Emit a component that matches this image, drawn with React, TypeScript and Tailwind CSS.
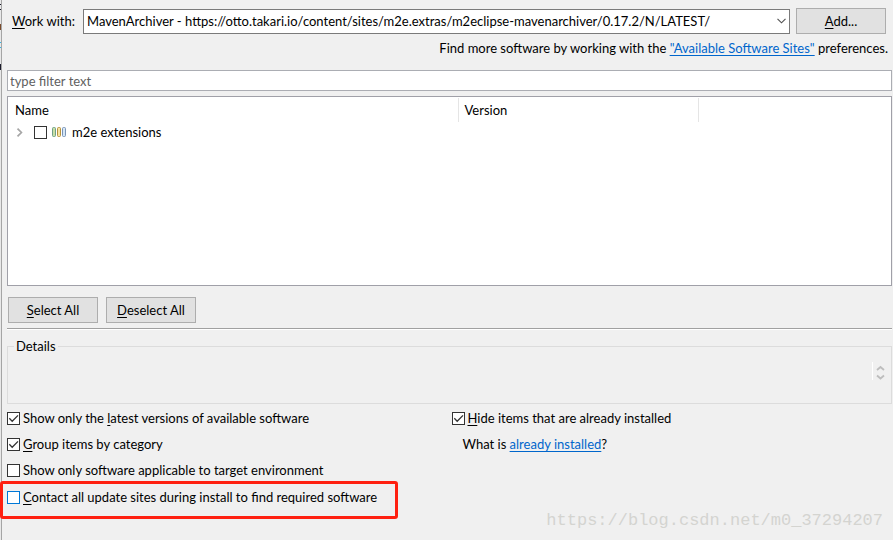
import { type ReactNode } from "react";

function Check({
  children,
  checked = false,
  blue = false,
}: {
  children: ReactNode;
  checked?: boolean;
  blue?: boolean;
}) {
  return (
    <label className="flex h-[26px] items-center gap-[3px]">
      <span className="grid size-[13px]">
        <input
          type="checkbox"
          defaultChecked={checked}
          className={`peer col-start-1 row-start-1 size-[13px] appearance-none border bg-white ${
            blue ? "border-[#0078d7]" : "border-[#333333]"
          }`}
        />
        <svg
          viewBox="0 0 13 13"
          className="pointer-events-none invisible col-start-1 row-start-1 size-[13px] peer-checked:visible"
          fill="none"
          stroke="#333333"
          strokeWidth="1.3"
          aria-hidden="true"
        >
          <path d="M2.3 6.3 5.2 9.3 11 3.4" />
        </svg>
      </span>
      <span className="whitespace-nowrap">{children}</span>
    </label>
  );
}

function Key({ children }: { children: ReactNode }) {
  return <span className="underline underline-offset-2">{children}</span>;
}

const button =
  "h-[26px] w-[90px] shrink-0 border border-[#adadad] bg-[#e1e1e1] text-center whitespace-nowrap";

export default function App() {
  return (
    <div className="flex min-h-screen bg-[#f0f0f0] font-['Lato','Noto_Sans',sans-serif] text-[13px] leading-5 text-black">
      <div className="w-0.5 shrink-0 border-r border-[#a5a5a5] bg-[#e8e8e8]">
        <svg width="1" height="72" viewBox="0 0 1 72" className="block" aria-hidden="true">
          <path d="M0 4h1v1H0zM0 9h1v1H0zM0 64h1v6H0z" fill="#1b1b2b" />
          <path d="M0 24h1v6H0z" fill="#7a4b2b" />
          <path d="M0 42h1v1H0zM0 47h1v1H0z" fill="#35b5e8" />
        </svg>
      </div>
      <main className="flex min-w-0 grow flex-col pt-2 pr-px pl-[5px]">
        <div className="flex items-center pr-1.5 pl-[5px]">
          <label htmlFor="site" className="w-[71px] shrink-0 whitespace-nowrap">
            <Key>W</Key>ork with:
          </label>
          <div className="grid min-w-0 grow">
            <select
              id="site"
              className="col-start-1 row-start-1 h-[25px] w-full appearance-none border border-[#7a7a7a] bg-white pr-5 pl-[3px]"
            >
              <option>
                MavenArchiver - https://otto.takari.io/content/sites/m2e.extras/m2eclipse-mavenarchiver/0.17.2/N/LATEST/
              </option>
            </select>
            <svg
              viewBox="0 0 9 6"
              className="pointer-events-none col-start-1 row-start-1 mr-1 h-1.5 w-[9px] self-center justify-self-end"
              fill="none"
              stroke="#505050"
              strokeWidth="1.1"
              aria-hidden="true"
            >
              <path d="M.5.8 4.5 4.8 8.5.8" />
            </svg>
          </div>
          <button type="button" className={`${button} ml-1.5`}>
            <Key>A</Key>dd...
          </button>
        </div>
        <p className="mt-1 mr-1 text-right">
          Find more software by working with the{" "}
          <a href="#sites" className="text-[#0066cc] underline underline-offset-2">
            "Available Software Sites"
          </a>{" "}
          preferences.
        </p>
        <input
          type="text"
          aria-label="Filter"
          placeholder="type filter text"
          className="mt-3 h-[21px] w-full border border-[#abadb3] bg-white px-0.5 placeholder:text-[#5f5f5f]"
        />
        <div className="mt-[5px] h-[190px] border border-[#a0a0a8] bg-white pt-px">
          <table className="w-full table-fixed border-collapse">
            <thead>
              <tr className="h-6 text-left">
                <th className="w-[450px] border-r border-[#e5e5e5] pl-[7px] font-normal">Name</th>
                <th className="w-[240px] border-r border-[#e5e5e5] pl-1.5 font-normal">Version</th>
                <td />
              </tr>
            </thead>
            <tbody>
              <tr>
                <td>
                  <div className="flex h-5 items-center pl-2">
                    <svg
                      width="8"
                      height="9"
                      viewBox="0 0 8 9"
                      className="mr-[10px] shrink-0"
                      fill="none"
                      stroke="#a6a6a6"
                      strokeWidth="1.7"
                      aria-hidden="true"
                    >
                      <path d="M1.5.6 5.4 4.5 1.5 8.4" />
                    </svg>
                    <input
                      id="m2e"
                      type="checkbox"
                      className="size-[13px] appearance-none border border-[#333333] bg-white"
                    />
                    <svg width="14" height="10" viewBox="0 0 14 10" className="mr-1.5 ml-[5px]" aria-hidden="true">
                      <rect x=".5" y=".5" width="3" height="9" rx="1" fill="#c8dfa5" stroke="#6f9f86" />
                      <rect x="5.5" y=".5" width="3" height="9" rx="1" fill="#f5e3a0" stroke="#b5923c" />
                      <rect x="10.5" y=".5" width="3" height="9" rx="1" fill="#d5e6f5" stroke="#7892b5" />
                    </svg>
                    <label htmlFor="m2e">m2e extensions</label>
                  </div>
                </td>
                <td />
                <td />
              </tr>
            </tbody>
          </table>
        </div>
        <div className="mt-[11px] flex gap-2 pl-px">
          <button type="button" className={button}>
            <Key>S</Key>elect All
          </button>
          <button type="button" className={button}>
            <Key>D</Key>eselect All
          </button>
        </div>
        <hr className="mt-[5px] h-0.5 border-t border-b border-t-[#a0a0a0] border-b-white" />
        <fieldset className="mt-1.5 h-[68px] border border-[#dcdcdc]">
          <legend className="ml-1.5 px-0.5">Details</legend>
          <div className="mt-1.5 flex h-[18px] justify-end pr-1.5">
            <svg
              width="13"
              height="18"
              viewBox="0 0 13 18"
              fill="none"
              stroke="#bdbdbd"
              strokeWidth="1.8"
              aria-hidden="true"
            >
              <path d="M.5 0v18" stroke="#fff" strokeWidth="1" />
              <path d="M5 8 8.5 5 12 8M5 13.5 8.5 16.5 12 13.5" />
            </svg>
          </div>
        </fieldset>
        <div className="mt-px grid grid-cols-2">
          <div>
            <Check checked>
              Show only the <Key>l</Key>atest versions of available software
            </Check>
            <Check checked>
              <Key>G</Key>roup items by category
            </Check>
            <Check>Show only software applicable to target environment</Check>
            <div className="-mt-0.5 -ml-[7px] h-[38px] w-[398px] rounded-[3px] border-[3px] border-[#ff2010] pl-1">
              <Check blue>
                <Key>C</Key>ontact all update sites during install to find required software
              </Check>
            </div>
          </div>
          <div className="pl-0.5">
            <Check checked>
              <Key>H</Key>ide items that are already installed
            </Check>
            <p className="flex h-[26px] items-center pl-[11px] whitespace-pre">
              What is{" "}
              <a href="#installed" className="text-[#0066cc] underline underline-offset-2">
                already installed
              </a>
              ?
            </p>
          </div>
        </div>
        <p className="-mt-2 mr-[9px] text-right font-['Liberation_Mono',monospace] text-[17px] text-[#d4d4d0]">
          https://blog.csdn.net/m0_37294207
        </p>
      </main>
    </div>
  );
}
